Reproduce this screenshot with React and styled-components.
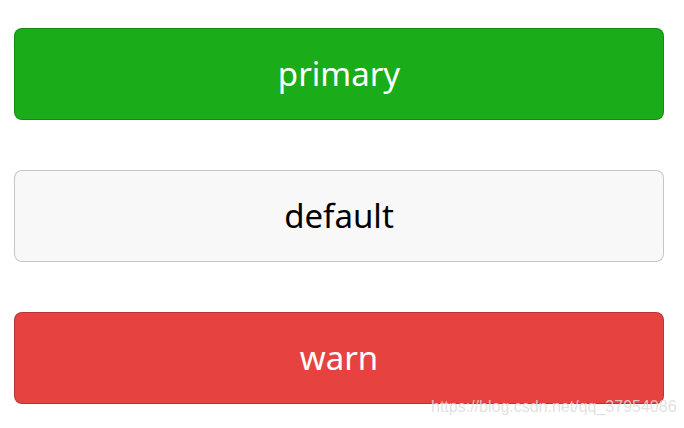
import styled, { createGlobalStyle } from 'styled-components'

const GlobalStyle = createGlobalStyle`
  html, body {
    margin: 0;
    padding: 0;
    background: #ffffff;
    font-family: "Noto Sans", "Liberation Sans", sans-serif;
  }
`

const Page = styled.div`
  position: relative;
  width: 684px;
  height: 428px;
  box-sizing: border-box;
  padding: 28px 20px 0 14px;
  display: flex;
  flex-direction: column;
  gap: 50px;
`

const colors = {
  primary: { bg: '#1aad19', fg: '#ffffff', border: 'rgba(0, 0, 0, 0.2)' },
  default: { bg: '#f8f8f8', fg: '#000000', border: 'rgba(0, 0, 0, 0.2)' },
  warn: { bg: '#e64340', fg: '#ffffff', border: 'rgba(0, 0, 0, 0.2)' },
}

const Button = styled.button`
  height: 92px;
  width: 100%;
  box-sizing: border-box;
  border-radius: 8px;
  border: 1px solid ${(p) => colors[p.$kind].border};
  background: ${(p) => colors[p.$kind].bg};
  color: ${(p) => colors[p.$kind].fg};
  font-family: "Noto Sans", "Liberation Sans", sans-serif;
  font-size: 33px;
  line-height: 1;
  padding: 0 0 2px;
  display: flex;
  align-items: center;
  justify-content: center;
`

const Watermark = styled.span`
  position: absolute;
  left: 431px;
  top: 398px;
  font-family: "Liberation Sans", Arial, sans-serif;
  font-size: 16px;
  color: rgba(220, 220, 220, 0.85);
  white-space: nowrap;
`

export default function App() {
  return (
    <>
      <GlobalStyle />
      <Page>
        <Button $kind="primary">primary</Button>
        <Button $kind="default">default</Button>
        <Button $kind="warn">warn</Button>
        <Watermark>https://blog.csdn.net/qq_37954086</Watermark>
      </Page>
    </>
  )
}
